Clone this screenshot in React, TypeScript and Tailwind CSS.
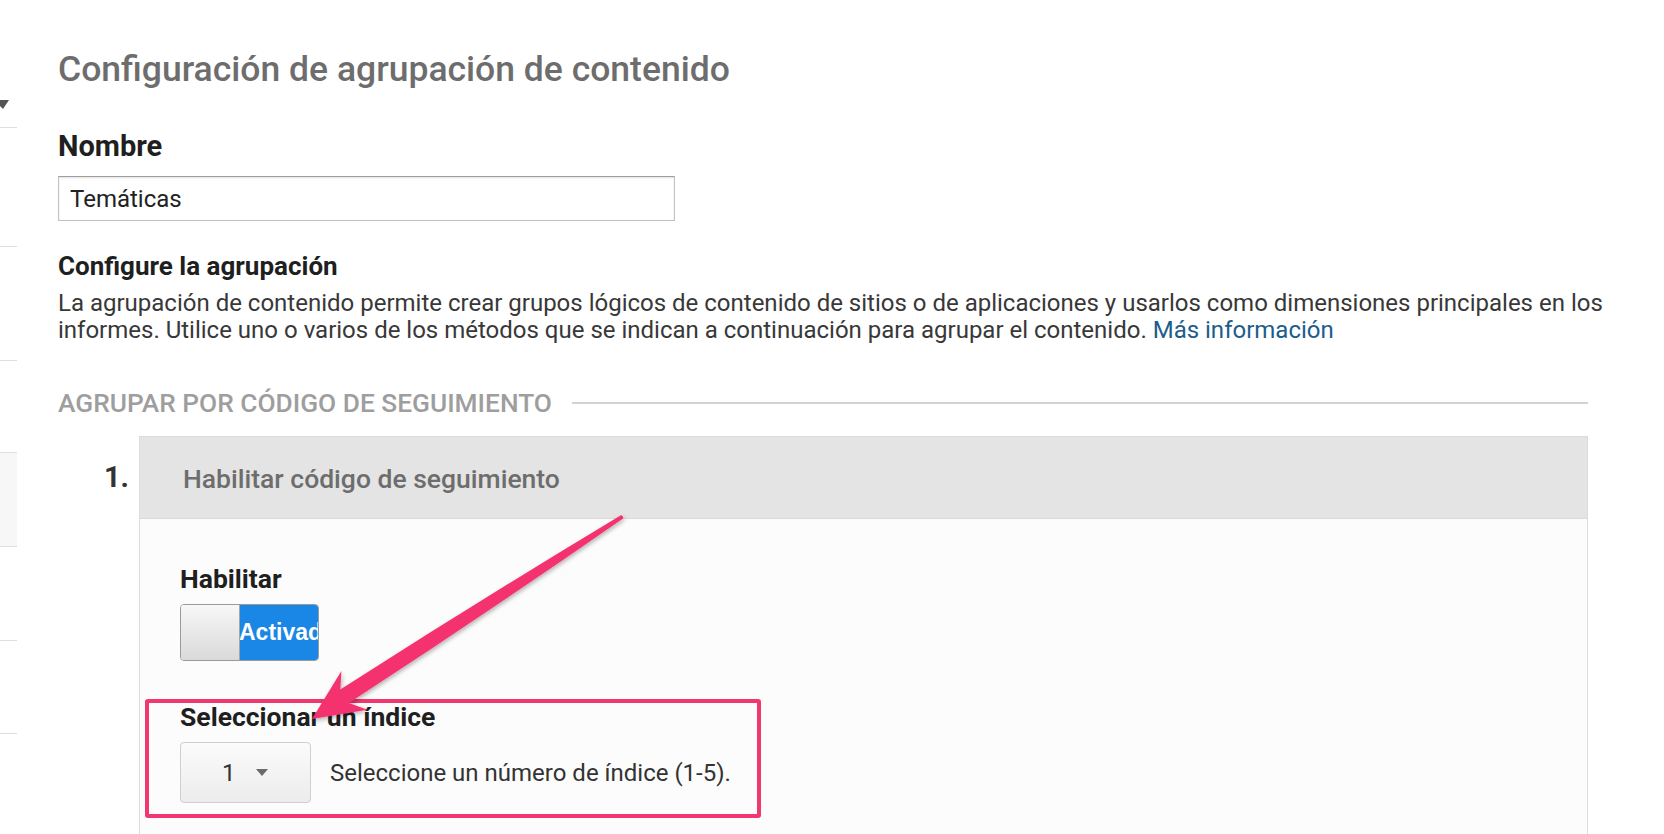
import React from "react";

const sideRows = [
  { h: "h-[119px]", gray: false },
  { h: "h-[114px]", gray: false },
  { h: "h-[92px]", gray: false },
  { h: "h-[94px]", gray: true },
  { h: "h-[94px]", gray: false },
  { h: "h-[93px]", gray: false },
];

const Sidebar = () => (
  <div className="w-[17px] shrink-0 flex flex-col">
    <div className="h-[128px] border-b border-[#dedede] relative">
      <svg className="absolute left-0 top-[99px]" width="10" height="12" viewBox="0 0 10 12">
        <polygon points="0,1 9,1 3,10 0,7" fill="#555" />
      </svg>
    </div>
    {sideRows.map((row, i) => (
      <div
        key={i}
        className={`${row.h} border-b border-[#dedede] ${row.gray ? "bg-[#f7f7f7]" : ""}`}
      />
    ))}
  </div>
);

const Toggle = () => (
  <div className="flex w-[139px] h-[57px] rounded-[4px] border border-[#9a9a9a] overflow-hidden">
    <div className="w-[59px] shrink-0 bg-gradient-to-b from-[#f7f7f7] to-[#dadada] border-r border-[#a5a5a5]" />
    <div className="flex-1 bg-[#1a86e6] overflow-hidden flex items-center">
      <span className="-ml-[1px] whitespace-nowrap text-white font-bold text-[23px] font-['Liberation_Sans',Arial,sans-serif] leading-none">
        Activado
      </span>
    </div>
  </div>
);

const IndexSelect = () => (
  <div className="flex items-center">
    <div className="w-[131px] h-[61px] rounded-[4px] border border-[#cfcfcf] bg-gradient-to-b from-[#fbfbfb] to-[#ececec] flex items-center pl-[41px] gap-[20px]">
      <span className="text-[24px] text-[#333]">1</span>
      <svg width="12" height="8" viewBox="0 0 12 8">
        <polygon points="0,0 12,0 6,7" fill="#6a6a6a" />
      </svg>
    </div>
    <span className="ml-[19px] text-[24px] text-[#333]">Seleccione un número de índice (1-5).</span>
  </div>
);

const Arrow = () => (
  <svg className="absolute left-0 top-0 pointer-events-none" width="1664" height="834" viewBox="0 0 1664 834">
    <defs>
      <filter id="arrowShadow" x="-10%" y="-10%" width="120%" height="120%">
        <feDropShadow dx="1" dy="2" stdDeviation="2" floodColor="#000" floodOpacity="0.3" />
      </filter>
    </defs>
    <path
      d="M312 719 L341.4 671.1 L340.3 689.6 Q480 600 620.9 515.2 Q623.5 515 623.1 518.6 Q490 611 348.9 703 L367.4 709.7 Z"
      fill="#f5336f"
      filter="url(#arrowShadow)"
    />
  </svg>
);

export default function App() {
  return (
    <div className="relative w-full h-[834px] bg-white overflow-hidden flex font-['Roboto','Liberation_Sans',sans-serif]">
      <Sidebar />
      <main className="flex-1 pl-[41px] pr-[40px] pt-[49px]">
        <h1 className="text-[35.5px] leading-[40px] font-medium text-[#6d6d6d]">
          Configuración de agrupación de contenido
        </h1>

        <h2 className="mt-[41px] text-[29px] leading-[32px] font-bold text-[#1f1f1f]">Nombre</h2>
        <div className="mt-[14px] w-[617px] h-[45px] border border-[#c2c2c2] border-t-[#9e9e9e] shadow-[inset_0_1px_2px_rgba(0,0,0,0.12)] flex items-center px-[11px]">
          <span className="text-[24px] text-[#222]">Temáticas</span>
        </div>

        <h2 className="mt-[30px] text-[26px] leading-[30px] font-bold text-[#1f1f1f]">Configure la agrupación</h2>
        <p className="mt-[9px] text-[24px] leading-[27px] text-[#383838]">
          La agrupación de contenido permite crear grupos lógicos de contenido de sitios o de aplicaciones y usarlos como dimensiones principales en los informes. Utilice uno o varios de los métodos que se indican a continuación para agrupar el contenido.{" "}
          <span className="text-[#1c5d8c]">Más información</span>
        </p>

        <div className="mr-[36px]">
          <div className="mt-[45px] flex items-center">
            <span className="text-[26.3px] leading-[28px] font-medium uppercase text-[#9e9e9e] whitespace-nowrap">
              Agrupar por código de seguimiento
            </span>
            <div className="flex-1 ml-[20px] h-[2px] bg-[#d2d2d2]" />
          </div>

          <div className="mt-[19px] flex">
            <div className="w-[81px] shrink-0 pr-[10px] pt-[24px] text-right text-[29px] leading-[34px] font-bold text-[#333]">1.</div>
            <div className="flex-1 border border-[#dcdcdc] bg-[#fcfcfc] h-[420px]">
              <div className="h-[82px] bg-[#e4e4e4] flex items-center pl-[43px] pt-[3px] border-b border-[#d9d9d9]">
                <span className="text-[26.5px] font-medium text-[#6d6d6d]">Habilitar código de seguimiento</span>
              </div>
              <div className="pl-[40px] pt-[45px]">
                <div className="text-[26.5px] leading-[30px] font-bold text-[#1f1f1f]">Habilitar</div>
                <div className="mt-[10px]">
                  <Toggle />
                </div>
                <div className="mt-[41px] text-[26.5px] leading-[30px] font-bold text-[#1f1f1f]">Seleccionar un índice</div>
                <div className="mt-[10px]">
                  <IndexSelect />
                </div>
              </div>
            </div>
          </div>
        </div>
      </main>

      <div className="absolute left-[145px] top-[699px] w-[616px] h-[119px] border-[4px] border-[#f2366f] rounded-[3px] pointer-events-none" />
      <Arrow />
    </div>
  );
}
